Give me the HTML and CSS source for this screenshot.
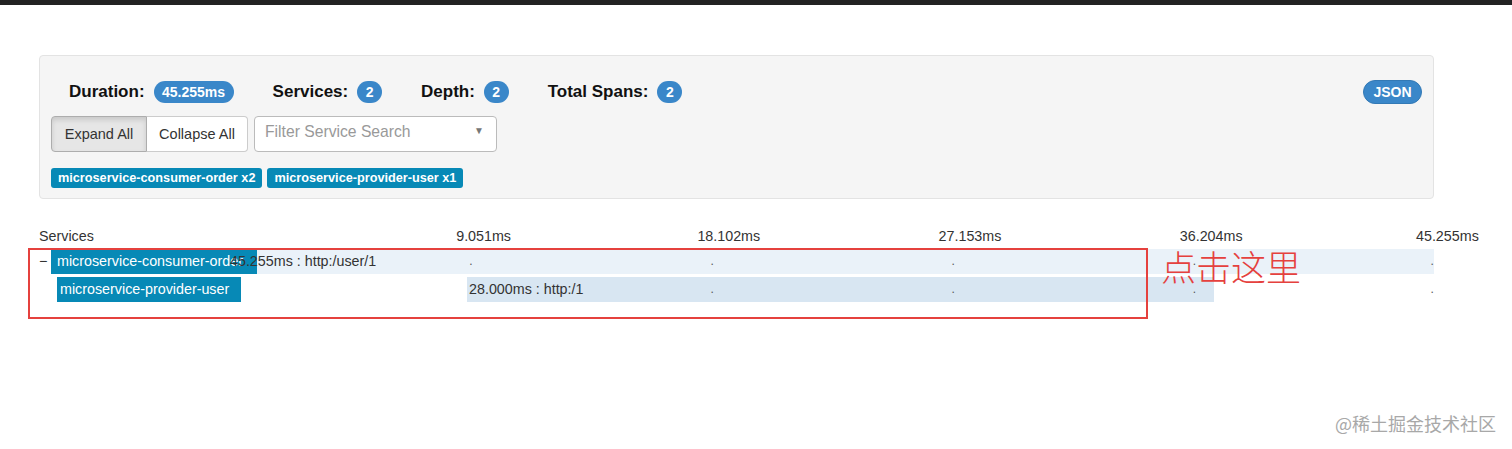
FILE: index.html
```html
<!DOCTYPE html>
<html lang="en">
<head>
<meta charset="utf-8">
<title>Trace</title>
<link rel="stylesheet" href="styles.css">
</head>
<body>
<div class="topbar"></div>
<div class="page">
  <div class="panel">
    <div class="summary">
      <div class="stats">
        <span class="stat"><span class="label">Duration:</span><span class="badge">45.255ms</span></span>
        <span class="stat"><span class="label">Services:</span><span class="badge">2</span></span>
        <span class="stat"><span class="label">Depth:</span><span class="badge">2</span></span>
        <span class="stat"><span class="label">Total Spans:</span><span class="badge">2</span></span>
      </div>
      <button class="json-btn">JSON</button>
    </div>
    <div class="controls">
      <div class="btn-group">
        <button class="btn active">Expand All</button>
        <button class="btn">Collapse All</button>
      </div>
      <div class="select">
        <span class="placeholder">Filter Service Search</span>
        <span class="caret">&#9660;</span>
      </div>
    </div>
    <div class="tags">
      <span class="tag">microservice-consumer-order x2</span>
      <span class="tag">microservice-provider-user x1</span>
    </div>
  </div>

  <div class="timeline">
    <div class="scale-row">
      <span class="services-title">Services</span>
      <div class="scale">
        <span class="tick-label" style="left:20%">9.051ms</span>
        <span class="tick-label" style="left:40%">18.102ms</span>
        <span class="tick-label" style="left:60%">27.153ms</span>
        <span class="tick-label" style="left:80%">36.204ms</span>
        <span class="tick-label last" style="left:100%">45.255ms</span>
      </div>
    </div>

    <div class="span-row">
      <span class="toggle">&minus;</span>
      <span class="service-name depth0">microservice-consumer-order</span>
      <div class="bars">
        <div class="bar light" style="left:0%;width:100%"></div>
        <span class="dot" style="left:20%">.</span>
        <span class="dot" style="left:40%">.</span>
        <span class="dot" style="left:60%">.</span>
        <span class="dot" style="left:80%">.</span>
        <span class="dot" style="left:99.7%">.</span>
        <span class="bar-text" style="left:0%">45.255ms : http:/user/1</span>
      </div>
    </div>

    <div class="span-row">
      <span class="indent"></span>
      <span class="service-name depth1">microservice-provider-user</span>
      <div class="bars">
        <div class="bar dark" style="left:19.82%;width:61.94%"></div>
        <span class="dot" style="left:40%">.</span>
        <span class="dot" style="left:60%">.</span>
        <span class="dot" style="left:80%">.</span>
        <span class="dot" style="left:99.7%">.</span>
        <span class="bar-text" style="left:19.82%">28.000ms : http:/1</span>
      </div>
    </div>
  </div>
</div>

<div class="annotation-box"></div>
<div class="annotation-text">点击这里</div>
<div class="watermark">@稀土掘金技术社区</div>
</body>
</html>
```

FILE: styles.css
```css
* { box-sizing: border-box; }

html, body {
  margin: 0;
  padding: 0;
  background: #fff;
  font-family: "Liberation Sans", Arial, sans-serif;
  color: #333;
}

body {
  position: relative;
  width: 1512px;
  height: 449px;
  overflow: hidden;
}

.topbar {
  height: 5px;
  background: #222;
}

.page {
  padding: 50px 78px 0 39px;
}

.panel {
  background: #f5f5f5;
  border: 1px solid #e3e3e3;
  border-radius: 4px;
  padding: 24px 11px 10px 11px;
  height: 144px;
}

.summary {
  display: flex;
  align-items: center;
  justify-content: space-between;
  height: 24px;
}

.stats {
  display: flex;
  align-items: center;
  gap: 39px;
  padding-left: 18px;
}

.stat {
  display: flex;
  align-items: center;
  gap: 9px;
}

.label {
  font-size: 17px;
  font-weight: bold;
  color: #111;
}

.badge {
  display: inline-block;
  height: 22px;
  line-height: 22px;
  padding: 0 8.5px;
  border-radius: 11px;
  background: #3a87c9;
  color: #fff;
  font-size: 14px;
  font-weight: bold;
}

.json-btn {
  height: 24px;
  width: 59px;
  border: 1px solid #3379b5;
  border-radius: 12px;
  background: #3a87c9;
  color: #fff;
  font-family: "Liberation Sans", Arial, sans-serif;
  font-size: 14px;
  font-weight: bold;
  padding: 0;
}

.controls {
  display: flex;
  align-items: center;
  gap: 6px;
  margin-top: 12px;
}

.btn-group {
  display: flex;
}

.btn {
  height: 36px;
  padding: 0;
  white-space: nowrap;
  font-family: "Liberation Sans", Arial, sans-serif;
  font-size: 14.5px;
  color: #333;
  background: #fff;
  border: 1px solid #ccc;
}

.btn:first-child {
  border-radius: 4px 0 0 4px;
  width: 96px;
}

.btn:last-child {
  border-radius: 0 4px 4px 0;
  border-left: none;
  width: 101px;
}

.btn.active {
  background: #e6e6e6;
  border-color: #adadad;
  box-shadow: inset 0 3px 5px rgba(0, 0, 0, 0.125);
}

.select {
  width: 243px;
  height: 36px;
  display: flex;
  align-items: center;
  justify-content: space-between;
  padding: 0 12px 0 10px;
  background: #fff;
  border: 1px solid #bbb;
  border-radius: 4px;
}

.placeholder {
  font-size: 15.7px;
  color: #999;
  margin-top: -5px;
}

.caret {
  font-size: 10px;
  color: #777;
  margin-top: -7px;
}

.tags {
  display: flex;
  gap: 5px;
  margin-top: 16px;
}

.tag {
  height: 20px;
  line-height: 20px;
  padding: 0 7px;
  border-radius: 3px;
  background: #0789b6;
  color: #fff;
  font-size: 12.7px;
  font-weight: bold;
}

.timeline {
  margin-top: 27px;
}

.scale-row {
  position: relative;
  height: 20px;
  line-height: 20px;
  font-size: 14.3px;
  color: #333;
}

.scale {
  position: absolute;
  left: 189px;
  right: 0;
  top: 0;
  bottom: 0;
}

.tick-label {
  position: absolute;
  top: 0;
  margin-left: -13px;
  white-space: nowrap;
}

.tick-label.last {
  margin-left: -18px;
}

.span-row {
  position: relative;
  display: flex;
  align-items: stretch;
  height: 25px;
  margin-top: 3px;
  font-size: 14.3px;
  line-height: 25px;
}

.toggle {
  width: 12px;
  color: #333;
  position: relative;
  z-index: 2;
}

.indent {
  width: 18px;
}

.service-name {
  position: relative;
  z-index: 2;
  background: #0789b6;
  color: #fff;
  white-space: nowrap;
  overflow: hidden;
}

.service-name.depth0 {
  width: 206px;
  padding-left: 6px;
}

.service-name.depth1 {
  width: 184px;
  padding-left: 3px;
}

.bars {
  position: absolute;
  left: 189px;
  right: 0;
  top: 0;
  bottom: 0;
}

.bar {
  position: absolute;
  top: 0;
  bottom: 0;
}

.bar.light {
  background: #eaf2f9;
}

.bar.dark {
  background: #d8e6f2;
}

.dot {
  position: absolute;
  top: 0;
  color: #555;
  font-size: 12px;
}

.bar-text {
  position: absolute;
  top: 0;
  z-index: 3;
  padding-left: 2px;
  color: #333;
  white-space: nowrap;
}

.annotation-box {
  position: absolute;
  left: 28px;
  top: 248px;
  width: 1120px;
  height: 71px;
  border: 2px solid #e5413e;
  z-index: 5;
}

.annotation-text {
  position: absolute;
  left: 1161px;
  top: 248px;
  font-family: "Noto Sans CJK SC", sans-serif;
  font-weight: 300;
  font-size: 35px;
  line-height: 36px;
  color: #e5413e;
  z-index: 5;
}

.watermark {
  position: absolute;
  left: 1335px;
  top: 410px;
  font-family: "Noto Sans CJK SC", sans-serif;
  font-size: 18px;
  line-height: 26px;
  color: #a8a8a8;
}
```
